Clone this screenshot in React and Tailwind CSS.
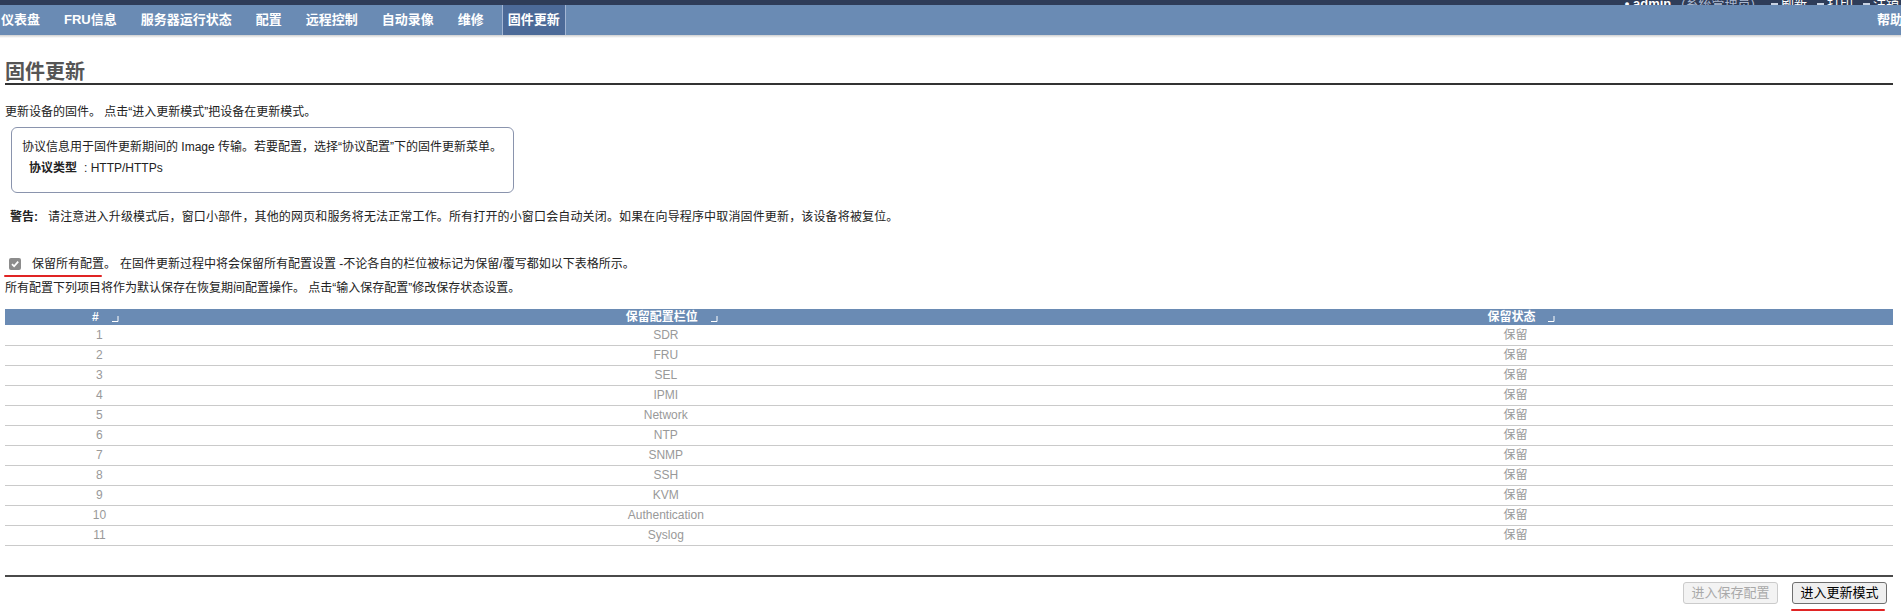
import React from 'react';

const navItems = ['仪表盘', 'FRU信息', '服务器运行状态', '配置', '远程控制', '自动录像', '维修', '固件更新'];

const rows = ['SDR', 'FRU', 'SEL', 'IPMI', 'Network', 'NTP', 'SNMP', 'SSH', 'KVM', 'Authentication', 'Syslog'];

const SortIcon = () => (
  <svg width="8" height="8" viewBox="0 0 8 8" className="inline-block ml-[12px] align-[-1px]">
    <path d="M1 7.5H7V2" fill="none" stroke="white" strokeWidth="1" />
  </svg>
);

const App = () => {
  return (
    <div className="w-[1901px] h-[616px] overflow-hidden bg-white text-[#222] font-['Liberation_Sans','Noto_Sans_CJK_SC',sans-serif]">
      {/* top user strip, mostly scrolled away */}
      <div className="h-[5px] overflow-hidden bg-[#2e3c58] flex justify-end items-end text-[13px] leading-[13px] text-white">
        <div className="flex items-end gap-[10px] mb-[-5px] mr-[2px]">
          <span className="font-bold">• admin</span>
          <span className="text-[#aab8d0] mr-[6px]">(系统管理员)</span>
          <span className="flex items-end gap-[3px]"><span className="w-[7px] h-[7px] bg-[#c8d2e2] inline-block" />刷新</span>
          <span className="flex items-end gap-[3px]"><span className="w-[7px] h-[7px] bg-[#c8d2e2] inline-block" />打印</span>
          <span className="flex items-end gap-[3px]"><span className="w-[7px] h-[7px] bg-[#c8d2e2] inline-block" />注销</span>
        </div>
      </div>

      {/* nav */}
      <div className="h-[30px] bg-[#6a8bb4] flex items-stretch justify-between text-white text-[13px] font-bold">
        <div className="flex items-stretch gap-[12px] ml-[-5px]">
          {navItems.map((item, i) =>
            i === navItems.length - 1 ? (
              <div key={item} className="flex items-center px-[5px] bg-[#4c6a98] border-x border-[#a3b6d4]">
                {item}
              </div>
            ) : (
              <div key={item} className="flex items-center px-[6px]">
                {item}
              </div>
            )
          )}
        </div>
        <div className="flex items-center mr-[-2px]">帮助</div>
      </div>
      <div className="h-[3px] bg-gradient-to-b from-[#cfcfcf] to-white" />

      <div className="pl-[5px] pr-[8px]">
        {/* title */}
        <div className="mt-[24px] h-[23px] leading-[20px] text-[20px] font-bold text-[#555] border-b-2 border-[#333]">
          固件更新
        </div>

        <p className="mt-[19px] text-[12px] leading-[16px]">
          更新设备的固件。 点击“进入更新模式”把设备在更新模式。
        </p>

        <div className="mt-[7px] ml-[6px] w-[503px] h-[66px] border border-[#8a94ad] rounded-[6px] pl-[10px] pt-[11px] text-[12px] leading-[16px]">
          <p>协议信息用于固件更新期间的 Image 传输。若要配置，选择“协议配置”下的固件更新菜单。</p>
          <p className="mt-[5px] pl-[7px]">
            <span className="font-bold">协议类型</span>
            <span className="ml-[7px]">: HTTP/HTTPs</span>
          </p>
        </div>

        <p className="mt-[16px] pl-[5px] text-[12px] leading-[16px]">
          <span className="font-bold">警告:</span>
          <span className="ml-[10px] tracking-[0.15px]">请注意进入升级模式后，窗口小部件，其他的网页和服务将无法正常工作。所有打开的小窗口会自动关闭。如果在向导程序中取消固件更新，该设备将被复位。</span>
        </p>

        {/* preserve all config */}
        <div className="mt-[31px] flex items-center h-[16px] text-[12px] leading-[16px]">
          <span className="relative ml-[4px] w-[12px] h-[12px] rounded-[2px] bg-[#8c8c8c] flex items-center justify-center">
            <svg width="10" height="10" viewBox="0 0 10 10">
              <path d="M2 5.2L4.1 7.3L8.2 2.6" fill="none" stroke="white" strokeWidth="1.8" />
            </svg>
            <span className="absolute left-[-5px] top-[17px] w-[98px] h-[2px] rounded-full bg-[#e02424]" />
          </span>
          <span className="ml-[11px]">保留所有配置。</span>
          <span className="ml-[4px]">在固件更新过程中将会保留所有配置设置 -不论各自的栏位被标记为保留/覆写都如以下表格所示。</span>
        </div>

        <p className="mt-[8px] text-[12px] leading-[16px]">
          所有配置下列项目将作为默认保存在恢复期间配置操作。 点击“输入保存配置”修改保存状态设置。
        </p>

        {/* table */}
        <table className="mt-[13px] w-full border-collapse table-fixed text-[12px]">
          <thead>
            <tr className="h-[16px] bg-[#6a8bb4] text-white font-bold leading-[16px]">
              <th className="w-[10%] p-0 pl-[12px] text-center">#<SortIcon /></th>
              <th className="w-[50%] p-0 pl-[12px] text-center">保留配置栏位<SortIcon /></th>
              <th className="w-[40%] p-0 pl-[12px] text-center">保留状态<SortIcon /></th>
            </tr>
          </thead>
          <tbody>
            {rows.map((name, i) => (
              <tr key={name} className="h-[20px] border-b border-[#cacaca] text-[#999] leading-[16px]">
                <td className="p-0 text-center">{i + 1}</td>
                <td className="p-0 text-center">{name}</td>
                <td className="p-0 text-center">保留</td>
              </tr>
            ))}
          </tbody>
        </table>

        <div className="mt-[29px] h-[2px] bg-[#4a4a4a]" />

        <div className="mt-[5px] flex justify-end gap-[14px] mr-[6px] text-[13px]">
          <button className="w-[95px] h-[22px] border border-[#cbcbcb] rounded-[3px] bg-[#f3f3f3] text-[#a9a9a9]">
            进入保存配置
          </button>
          <div className="relative">
            <button className="w-[95px] h-[22px] border border-[#6f6f6f] rounded-[3px] bg-[#efefef] text-black">
              进入更新模式
            </button>
            <span className="absolute left-[-1px] top-[27px] w-[94px] h-[2px] rounded-full bg-[#e02424]" />
          </div>
        </div>
      </div>
    </div>
  );
};

export default App;
